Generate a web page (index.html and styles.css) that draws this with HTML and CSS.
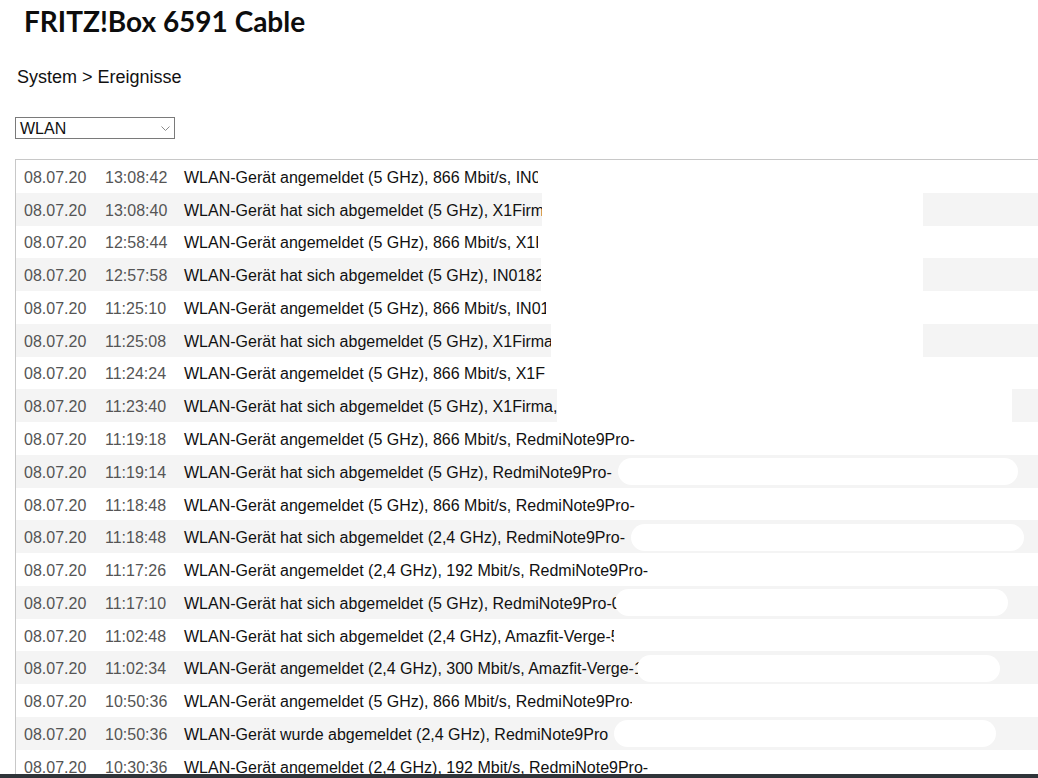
FILE: index.html
```html
<!DOCTYPE html>
<html lang="de">

<head>
    <meta charset="UTF-8">
    <meta name="viewport" content="width=device-width, initial-scale=1.0">
    <title>FRITZ!Box 6591 Cable - Ereignisse</title>
    <link rel="stylesheet" href="styles.css">
</head>

<body>
    <h1 class="box-title">FRITZ!Box 6591 Cable</h1>

    <div class="breadcrumb">System &gt; Ereignisse</div>

    <div class="filter-select">
        <span>WLAN</span>
        <svg class="chevron" width="9" height="5" viewBox="0 0 9 5">
            <path d="M0.5 0.5 L4.5 4.5 L8.5 0.5" fill="none" stroke="#8a8a8a" stroke-width="1"/>
        </svg>
    </div>

    <div class="event-list">
        <div class="event-row">
            <span class="date">08.07.20</span><span class="time">13:08:42</span>
            <span class="msg">WLAN-Gerät angemeldet (5 GHz), 866 Mbit/s, IN0</span>
            <span class="redact cut3"></span>
        </div>
        <div class="event-row">
            <span class="date">08.07.20</span><span class="time">13:08:40</span>
            <span class="msg">WLAN-Gerät hat sich abgemeldet (5 GHz), X1Firm</span>
            <span class="redact cut2 block"></span>
        </div>
        <div class="event-row">
            <span class="date">08.07.20</span><span class="time">12:58:44</span>
            <span class="msg">WLAN-Gerät angemeldet (5 GHz), 866 Mbit/s, X1F</span>
            <span class="redact cut7"></span>
        </div>
        <div class="event-row">
            <span class="date">08.07.20</span><span class="time">12:57:58</span>
            <span class="msg">WLAN-Gerät hat sich abgemeldet (5 GHz), IN0182</span>
            <span class="redact cut3 block"></span>
        </div>
        <div class="event-row">
            <span class="date">08.07.20</span><span class="time">11:25:10</span>
            <span class="msg">WLAN-Gerät angemeldet (5 GHz), 866 Mbit/s, IN01</span>
            <span class="redact cut3"></span>
        </div>
        <div class="event-row">
            <span class="date">08.07.20</span><span class="time">11:25:08</span>
            <span class="msg">WLAN-Gerät hat sich abgemeldet (5 GHz), X1Firma</span>
            <span class="redact cut2 block"></span>
        </div>
        <div class="event-row">
            <span class="date">08.07.20</span><span class="time">11:24:24</span>
            <span class="msg">WLAN-Gerät angemeldet (5 GHz), 866 Mbit/s, X1F</span>
            <span class="redact"></span>
        </div>
        <div class="event-row">
            <span class="date">08.07.20</span><span class="time">11:23:40</span>
            <span class="msg">WLAN-Gerät hat sich abgemeldet (5 GHz), X1Firma,</span>
            <span class="redact wide"></span>
        </div>
        <div class="event-row">
            <span class="date">08.07.20</span><span class="time">11:19:18</span>
            <span class="msg">WLAN-Gerät angemeldet (5 GHz), 866 Mbit/s, RedmiNote9Pro-</span>
            <span class="redact"></span>
        </div>
        <div class="event-row">
            <span class="date">08.07.20</span><span class="time">11:19:14</span>
            <span class="msg">WLAN-Gerät hat sich abgemeldet (5 GHz), RedmiNote9Pro-</span>
            <span class="redact pill gap" style="margin-right: 20px"></span>
        </div>
        <div class="event-row">
            <span class="date">08.07.20</span><span class="time">11:18:48</span>
            <span class="msg">WLAN-Gerät angemeldet (5 GHz), 866 Mbit/s, RedmiNote9Pro-</span>
            <span class="redact"></span>
        </div>
        <div class="event-row">
            <span class="date">08.07.20</span><span class="time">11:18:48</span>
            <span class="msg">WLAN-Gerät hat sich abgemeldet (2,4 GHz), RedmiNote9Pro-</span>
            <span class="redact pill gap" style="margin-right: 14px"></span>
        </div>
        <div class="event-row">
            <span class="date">08.07.20</span><span class="time">11:17:26</span>
            <span class="msg">WLAN-Gerät angemeldet (2,4 GHz), 192 Mbit/s, RedmiNote9Pro-</span>
            <span class="redact"></span>
        </div>
        <div class="event-row">
            <span class="date">08.07.20</span><span class="time">11:17:10</span>
            <span class="msg">WLAN-Gerät hat sich abgemeldet (5 GHz), RedmiNote9Pro-0</span>
            <span class="redact pill cut6" style="margin-right: 30px"></span>
        </div>
        <div class="event-row">
            <span class="date">08.07.20</span><span class="time">11:02:48</span>
            <span class="msg">WLAN-Gerät hat sich abgemeldet (2,4 GHz), Amazfit-Verge-5</span>
            <span class="redact cut6"></span>
        </div>
        <div class="event-row">
            <span class="date">08.07.20</span><span class="time">11:02:34</span>
            <span class="msg">WLAN-Gerät angemeldet (2,4 GHz), 300 Mbit/s, Amazfit-Verge-1</span>
            <span class="redact pill cut6" style="margin-right: 38px"></span>
        </div>
        <div class="event-row">
            <span class="date">08.07.20</span><span class="time">10:50:36</span>
            <span class="msg">WLAN-Gerät angemeldet (5 GHz), 866 Mbit/s, RedmiNote9Pro-</span>
            <span class="redact cut3"></span>
        </div>
        <div class="event-row">
            <span class="date">08.07.20</span><span class="time">10:50:36</span>
            <span class="msg">WLAN-Gerät wurde abgemeldet (2,4 GHz), RedmiNote9Pro</span>
            <span class="redact pill gap" style="margin-right: 42px"></span>
        </div>
        <div class="event-row">
            <span class="date">08.07.20</span><span class="time">10:30:36</span>
            <span class="msg">WLAN-Gerät angemeldet (2,4 GHz), 192 Mbit/s, RedmiNote9Pro-</span>
            <span class="redact"></span>
        </div>
    </div>

    <div class="taskbar-edge"></div>
</body>

</html>
```

FILE: styles.css
```css
html {
    overflow: hidden;
}

body {
    font-family: 'Liberation Sans', Arial, sans-serif;
    background-color: #fff;
    color: #111;
    margin: 0;
    padding: 0;
}

.box-title {
    font-family: Lato, 'Liberation Sans', sans-serif;
    font-weight: 700;
    font-size: 28px;
    line-height: 36px;
    color: #0d0d0d;
    margin: 0;
    padding: 3px 0 0 24px;
}

.breadcrumb {
    font-size: 18px;
    line-height: 21px;
    margin: 28px 0 0 17px;
    color: #111;
}

.filter-select {
    width: 158px;
    height: 20px;
    margin: 29px 0 0 15px;
    border: 1px solid #7a7a7a;
    display: flex;
    align-items: center;
    justify-content: space-between;
    font-size: 16px;
    line-height: 20px;
}

.filter-select span {
    padding: 1px 0 0 4px;
}

.chevron {
    margin-right: 4px;
}

.event-list {
    margin: 20px 0 0 15px;
    border-top: 1px solid #c8c8c8;
    border-left: 1px solid #c8c8c8;
}

.event-row {
    display: flex;
    align-items: center;
    box-sizing: border-box;
    height: 32.78px;
    padding: 3px 0 0 8px;
    font-size: 16px;
    white-space: nowrap;
}

.event-row:nth-child(even) {
    background-color: #f4f4f4;
}

.date {
    width: 81px;
    flex: none;
    color: #555;
}

.time {
    width: 79px;
    flex: none;
    color: #555;
}

.msg {
    flex: none;
    color: #111;
}

/* white paint over the hidden device names */
.redact {
    flex: 1;
    align-self: stretch;
    margin-top: -3px;
    background-color: #fff;
}

.redact.block {
    margin-right: 115px;
}

.redact.wide {
    margin-right: 26px;
}

.redact.pill {
    align-self: center;
    margin-top: -2px;
    height: 27px;
    border-radius: 14px;
}

.redact.gap {
    margin-left: 6px;
}

.cut2 {
    margin-left: -2px;
}

.cut3 {
    margin-left: -3px;
}

.cut6 {
    margin-left: -6px;
}

.cut7 {
    margin-left: -7px;
}

.taskbar-edge {
    position: fixed;
    left: 0;
    right: 0;
    bottom: 0;
    height: 4px;
    background-color: #2f3439;
}
```
